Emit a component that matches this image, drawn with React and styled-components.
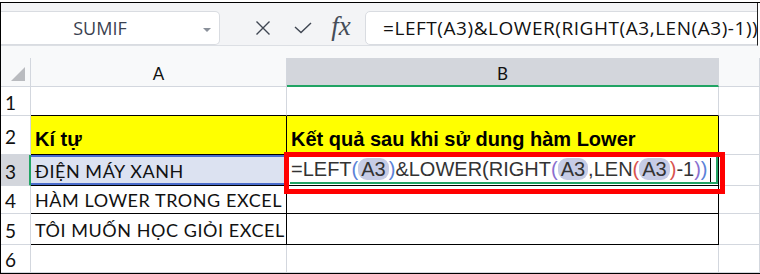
import React from "react";
import styled, { createGlobalStyle } from "styled-components";

const GlobalStyle = createGlobalStyle`
  html, body {
    margin: 0;
    padding: 0;
    background: #ffffff;
    overflow: hidden;
  }
`;

const UI = `"Open Sans", "Noto Sans", sans-serif`;
const CELL = `Lato, "Noto Sans", sans-serif`;
const ARIAL = `"Liberation Sans", Arial, sans-serif`;
const GREEN = "#21a464";
const GRID = "#d3d7de";

const Frame = styled.div`
  position: relative;
  width: 760px;
  height: 272px;
  margin-top: 2px;
  box-sizing: border-box;
  border: 1px solid #000;
  border-right: none;
  overflow: hidden;
  display: flex;
  flex-direction: column;
  background: #fff;
`;

const Toolbar = styled.div`
  width: 757px;
  height: 43px;
  flex: 0 0 43px;
  box-sizing: border-box;
  padding-top: 8px;
  background: #f3f4f6;
  border-bottom: 1px solid #dcdfe4;
  border-right: 1px solid #222;
  display: flex;
  align-items: flex-start;
  overflow: hidden;
`;

const NameBox = styled.div`
  position: relative;
  flex: 0 0 219px;
  height: 34px;
  box-sizing: border-box;
  background: #fff;
  border: 1px solid #d9dce1;
  border-left: none;
  border-radius: 0 5px 5px 0;
  display: flex;
  align-items: center;
  justify-content: center;
  font-family: ${UI};
  font-size: 18px;
  color: #3a4150;
  padding-right: 20px;
`;

const Caret = styled.span`
  position: absolute;
  right: 8px;
  top: 16px;
  width: 0;
  height: 0;
  border-left: 4px solid transparent;
  border-right: 4px solid transparent;
  border-top: 4px solid #8a909a;
`;

const Tools = styled.div`
  flex: 0 0 145px;
  height: 34px;
  display: flex;
  align-items: center;
  padding-left: 33px;
  box-sizing: border-box;
  color: #3f4652;
`;

const ToolIcon = styled.span`
  width: ${({ w }) => w}px;
  display: flex;
  align-items: center;
  justify-content: center;
`;

const Fx = styled.span`
  font-family: "Liberation Serif", "DejaVu Serif", serif;
  font-style: italic;
  font-size: 27px;
  line-height: 1;
  color: #454c58;
  margin-top: -3px;
`;

const FormulaBox = styled.div`
  flex: 0 0 430px;
  height: 34px;
  box-sizing: border-box;
  background: #fff;
  border: 1px solid #d9dce1;
  border-radius: 5px;
  padding-left: 17px;
  display: flex;
  align-items: center;
  white-space: nowrap;
  font-family: ${UI};
  font-size: 19px;
  letter-spacing: 0.55px;
  color: #111;
`;

const Gap = styled.div`
  flex: 0 0 12px;
  background: #f8f9fa;
`;

const Sheet = styled.div`
  flex: 1;
  display: grid;
  grid-template-columns: 30px 256px 432px 1fr;
  grid-template-rows: 29px 29px 39px 31px 28px 31px 28px;
`;

const Corner = styled.div`
  position: relative;
  box-sizing: border-box;
  background: #f8f9fa;
  border-right: 1px solid ${GRID};
  border-bottom: 1px solid ${GRID};
  &::after {
    content: "";
    position: absolute;
    right: 5px;
    bottom: 5px;
    width: 0;
    height: 0;
    border-left: 14px solid transparent;
    border-bottom: 14px solid #b9bbbf;
  }
`;

const ColHeader = styled.div`
  box-sizing: border-box;
  background: ${({ selected }) => (selected ? "#d3d6dc" : "#f8f9fa")};
  border-right: 1px solid ${({ selected }) => (selected ? "#d3d6dc" : GRID)};
  border-bottom: ${({ selected }) => (selected ? `2px solid ${GREEN}` : `1px solid ${GRID}`)};
  display: flex;
  align-items: center;
  justify-content: center;
  padding-top: 3px;
  font-family: ${CELL};
  font-size: 17px;
  color: #111;
`;

const RowHeader = styled.div`
  box-sizing: border-box;
  background: ${({ selected }) => (selected ? "#d3d6dc" : "#fff")};
  border-right: ${({ selected }) => (selected ? `2px solid ${GREEN}` : `1px solid ${GRID}`)};
  border-bottom: 1px solid ${GRID};
  display: flex;
  align-items: center;
  padding: 2px 0 0 4px;
  font-family: ${CELL};
  font-size: 19px;
  color: #111;
`;

const Cell = styled.div`
  position: relative;
  box-sizing: border-box;
  background: ${({ fill }) => fill || "#fff"};
  border-right: 1px solid ${({ edge }) => (edge ? "#000" : GRID)};
  border-bottom: 1px solid ${({ bottom }) => (bottom ? "#000" : GRID)};
  display: flex;
  align-items: ${({ low }) => (low ? "flex-end" : "center")};
  padding: ${({ low }) => (low ? "0 0 3px 4px" : "1px 0 0 4px")};
  white-space: nowrap;
  font-family: ${CELL};
  font-size: 18px;
  letter-spacing: 0.55px;
  color: #111;
`;

const RefCell = styled(Cell)`
  box-shadow: inset 0 2px 0 #4a6ccc, inset 0 -2px 0 #4a6ccc;
`;

const Heading = styled.span`
  font-family: ${ARIAL};
  font-weight: bold;
  font-size: 20px;
  letter-spacing: 0;
  color: #000;
`;

const EditCell = styled(Cell)`
  padding: 0 0 0 4px;
  font-family: ${ARIAL};
  font-size: 20px;
  letter-spacing: 0;
  color: #333;
  &::before {
    content: "";
    position: absolute;
    left: 3px;
    right: 1px;
    bottom: 1px;
    height: 2px;
    background: ${GREEN};
  }
  &::after {
    content: "";
    position: absolute;
    right: 0;
    top: 1px;
    bottom: 1px;
    width: 2px;
    background: ${GREEN};
  }
`;

const Ref = styled.span`
  background: #c6cce6;
  border-radius: 9px;
  padding: 0 3px;
`;

const Paren = styled.span`
  color: ${({ c }) => c};
`;

const Cursor = styled.span`
  display: inline-block;
  width: 1px;
  height: 24px;
  background: #000;
  margin-left: 2px;
  vertical-align: middle;
`;

const Highlight = styled.div`
  position: absolute;
  left: 283px;
  top: 149px;
  width: 441px;
  height: 42px;
  box-sizing: border-box;
  border: 5px solid #ff0000;
  pointer-events: none;
`;

const XIcon = () => (
  <svg width="16" height="16" viewBox="0 0 16 16">
    <path d="M1.5 1.5 L14.5 14.5 M14.5 1.5 L1.5 14.5" stroke="#3f4652" strokeWidth="1.4" fill="none" />
  </svg>
);

const CheckIcon = () => (
  <svg width="18" height="12" viewBox="0 0 18 12">
    <path d="M1 5 L7 10.5 L17 1" stroke="#3f4652" strokeWidth="1.4" fill="none" />
  </svg>
);

const BLUE = "#5b82d8";
const RED = "#d9534f";
const PURPLE = "#8a6fd0";

const Formula = () => (
  <>
    =LEFT<Paren c={BLUE}>(</Paren>
    <Ref>A3</Ref>
    <Paren c={BLUE}>)</Paren>&amp;LOWER<Paren c="#333">(</Paren>RIGHT
    <Paren c={PURPLE}>(</Paren>
    <Ref>A3</Ref>,LEN<Paren c={RED}>(</Paren>
    <Ref>A3</Ref>
    <Paren c={RED}>)</Paren>-1<Paren c={PURPLE}>)</Paren>
    <Paren c={BLUE}>)</Paren>
    <Cursor />
  </>
);

export default function App() {
  return (
    <>
      <GlobalStyle />
      <Frame>
        <Toolbar>
          <NameBox>
            SUMIF
            <Caret />
          </NameBox>
          <Tools>
            <ToolIcon w={20}>
              <XIcon />
            </ToolIcon>
            <ToolIcon w={20} />
            <ToolIcon w={20}>
              <CheckIcon />
            </ToolIcon>
            <ToolIcon w={16} />
            <ToolIcon w={24}>
              <Fx>fx</Fx>
            </ToolIcon>
          </Tools>
          <FormulaBox>=LEFT(A3)&amp;LOWER(RIGHT(A3,LEN(A3)-1))</FormulaBox>
        </Toolbar>
        <Gap />
        <Sheet>
          <Corner />
          <ColHeader>A</ColHeader>
          <ColHeader selected>B</ColHeader>
          <ColHeader />

          <RowHeader>1</RowHeader>
          <Cell bottom />
          <Cell bottom />
          <Cell />

          <RowHeader>2</RowHeader>
          <Cell fill="#ffff00" edge bottom low>
            <Heading>Kí tự</Heading>
          </Cell>
          <Cell fill="#ffff00" edge bottom low>
            <Heading>Kết quả sau khi sử dung hàm Lower</Heading>
          </Cell>
          <Cell />

          <RowHeader selected>3</RowHeader>
          <RefCell fill="#dce2f1" edge bottom>
            ĐIỆN MÁY XANH
          </RefCell>
          <EditCell edge bottom>
            <span>
              <Formula />
            </span>
          </EditCell>
          <Cell />

          <RowHeader>4</RowHeader>
          <Cell edge bottom>HÀM LOWER TRONG EXCEL</Cell>
          <Cell edge bottom />
          <Cell />

          <RowHeader>5</RowHeader>
          <Cell edge bottom>TÔI MUỐN HỌC GIỎI EXCEL</Cell>
          <Cell edge bottom />
          <Cell />

          <RowHeader>6</RowHeader>
          <Cell />
          <Cell />
          <Cell />
        </Sheet>
        <Highlight />
      </Frame>
    </>
  );
}
